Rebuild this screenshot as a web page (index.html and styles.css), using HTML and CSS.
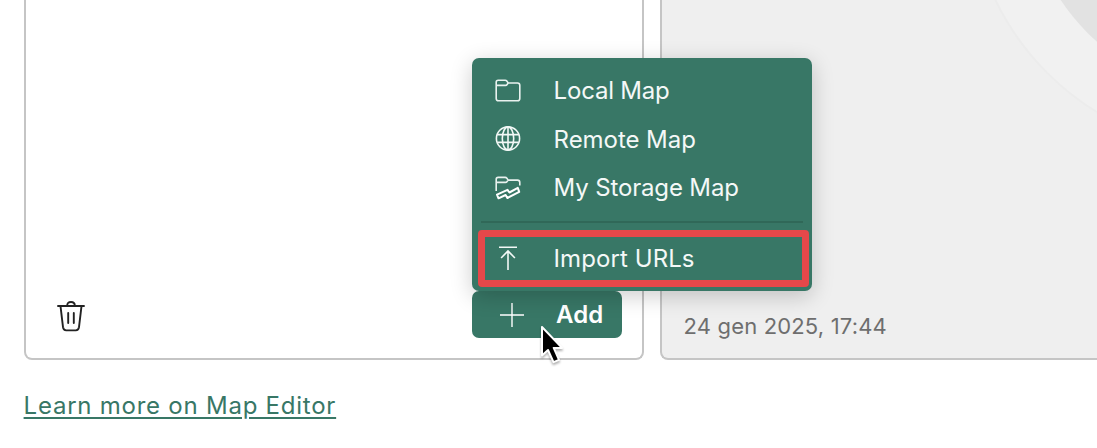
FILE: index.html
```
<!DOCTYPE html>
<html lang="en">
<head>
<meta charset="utf-8">
<title>Map Editor</title>
<link rel="stylesheet" href="styles.css">
</head>
<body>
<main class="page">
  <section class="cards">
    <article class="card">
      <button class="trash" aria-label="Delete">
        <svg width="30" height="32" viewBox="0 0 30 32" fill="none" stroke="#222" stroke-width="1.9" stroke-linecap="round" stroke-linejoin="round"><path d="M2 6H28M4.5 6.2L7 27.2Q7.5 30.4 10.2 30.4H19.8Q22.5 30.4 23 27.2L25.5 6.2M11.2 5.6Q11.2 2 15 2T18.8 5.6M12.2 13V23M17.8 13V23"/></svg>
      </button>
      <div class="add-wrap">
        <button class="add">
          <svg width="26" height="26" viewBox="0 0 26 26" stroke="#fff" stroke-width="1.4"><path d="M1 13H25M13 1V25"/></svg>
          <span>Add</span>
        </button>
        <div class="menu">
          <div class="item local">
            <svg width="26" height="26" viewBox="0 0 26 26" fill="none" stroke="#e9f2ef" stroke-width="1.6" stroke-linejoin="round"><path d="M1.2 7.5V4.2Q1.2 2.3 3.2 2.3H10.2Q11.2 2.3 11.9 3.1L13.2 5H22.5Q24.8 5 24.8 7.3V20.4Q24.8 22.7 22.5 22.7H3.5Q1.2 22.7 1.2 20.4ZM1.2 7.4H10.5Q11.5 7.4 12.1 6.5L13.2 5"/></svg>
            <span>Local Map</span>
          </div>
          <div class="item remote">
            <svg width="26" height="26" viewBox="0 0 26 26" fill="none" stroke="#f2f8f6" stroke-width="1.6"><circle cx="13" cy="12.5" r="11.6"/><ellipse cx="13" cy="12.5" rx="5.7" ry="11.6"/><path d="M13 .9V24.1M2.2 8.6H23.8M2.2 16.4H23.8"/></svg>
            <span>Remote Map</span>
          </div>
          <div class="item storage">
            <svg width="26" height="26" viewBox="0 0 26 26" fill="none" stroke="#e9f2ef" stroke-width="1.6" stroke-linejoin="round"><path d="M1.2 16V4.4Q1.2 2.4 3.2 2.4H10.2Q11.2 2.4 11.9 3.3L13.2 5.1H22.5Q24.8 5.1 24.8 7.6V10.5M1.2 7.4H10.5Q11.5 7.4 12.1 6.5L13.2 5.1"/><path stroke="#fff" stroke-width="2" d="M2 19.6L12.5 14.8L14.4 17.5L22.8 12.9L24.2 16.8L12.4 23L10.6 20L3.5 23.3Z"/></svg>
            <span>My Storage Map</span>
          </div>
          <hr class="divider">
          <div class="item import">
            <svg width="26" height="26" viewBox="0 0 26 26" fill="none" stroke="#f2f8f6" stroke-width="1.6"><path d="M4 2.2H22M13 25V6.2M6.1 13L13 6L19.9 13"/></svg>
            <span>Import URLs</span>
          </div>
        </div>
        <svg class="cursor" width="26" height="42" viewBox="0 0 26 42"><path d="M3 3V31.5L9 26L14.5 38.2L20 35.8L14.7 23.9H23Z" fill="#000" stroke="#fff" stroke-width="2" stroke-linejoin="round"/></svg>
      </div>
    </article>
    <article class="card preview">
      <svg class="art" width="436" height="358" viewBox="0 0 436 358"><circle cx="576" cy="-117" r="268" fill="#f1f1f1" stroke="#ececec" stroke-width="2"/><circle cx="576" cy="-117" r="211" fill="#e2e2e2"/></svg>
      <time>24 gen 2025, 17:44</time>
    </article>
  </section>
  <a class="learn" href="#">Learn more on Map Editor</a>
</main>
</body>
</html>
```
FILE: styles.css
```
* { box-sizing: border-box; }
body {
  margin: 0;
  background: #fff;
  font-family: Inter, "Liberation Sans", sans-serif;
  font-size: 24px;
}
.page {
  height: 448px;
  padding-left: 23.6px;
  overflow: hidden;
}
.cards {
  display: grid;
  grid-template-columns: 620.4px 1fr;
  gap: 16.5px;
  height: 360px;
}
.card {
  position: relative;
  display: flex;
  justify-content: space-between;
  align-items: flex-end;
  padding: 0 20px 20px 30px;
  border: 2px solid #c5c5c5;
  border-top: 0;
  border-radius: 0 0 8px 8px;
  background: #fff;
}
.preview {
  padding: 0 0 18px 21px;
  border-right: 0;
  border-bottom-right-radius: 0;
  background: #efefef;
  color: #6e6e6e;
  font-size: 22px;
  line-height: 28px;
}
.preview time { position: relative; letter-spacing: .17px; }
.art {
  position: absolute;
  left: 0;
  top: 0;
  width: 100%;
  height: 358px;
}
button {
  border: 0;
  padding: 0;
  background: none;
  font: inherit;
}
.trash { display: flex; padding-bottom: 6px; }
.add-wrap {
  position: relative;
  z-index: 2;
}
.add {
  display: flex;
  align-items: center;
  gap: 31.5px;
  width: 150.4px;
  height: 47.5px;
  padding: 1px 0 0 27px;
  border-radius: 7px;
  background: #387766;
  color: #fff;
  font-weight: 600;
}
.menu {
  position: absolute;
  left: 0;
  bottom: 47.5px;
  width: 340.6px;
  height: 233px;
  padding-top: 9px;
  border-radius: 7px;
  background: #387766;
  color: #f4f8f7;
  box-shadow: 0 5px 22px rgba(0, 0, 0, .2);
}
.item {
  display: flex;
  align-items: center;
  gap: 33px;
  height: 48.5px;
  padding-left: 23px;
}
.local { letter-spacing: -.2px; }
.remote { letter-spacing: -.05px; }
.storage { letter-spacing: -.15px; }
.divider {
  height: 2px;
  margin: 9px 9px 6.5px;
  border: 0;
  background: #306858;
}
.import {
  height: 57px;
  margin: 0 3px 0 6px;
  padding-left: 10px;
  border: 7px solid #e5484a;
  border-radius: 4px;
  letter-spacing: .08px;
}
.cursor {
  position: absolute;
  left: 67px;
  top: 33px;
  filter: drop-shadow(0 2px 1px rgba(0, 0, 0, .3));
}
.learn {
  display: inline-block;
  margin-top: 31px;
  color: #387766;
  line-height: 30px;
  letter-spacing: .76px;
  text-decoration-thickness: 2px;
  text-underline-offset: 3px;
}
```
